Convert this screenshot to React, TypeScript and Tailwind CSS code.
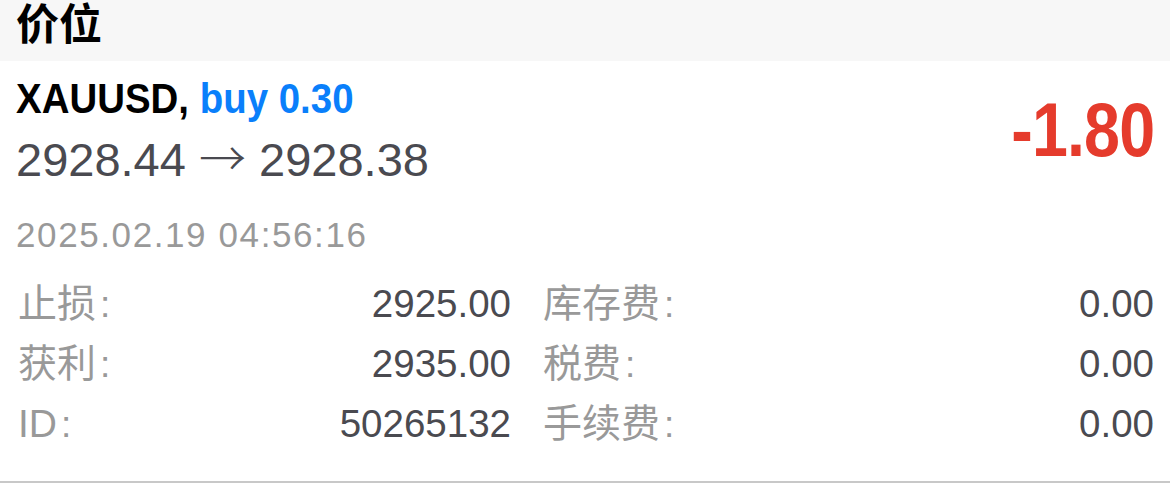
import React from "react";

const font = { fontFamily: '"Liberation Sans", "Noto Sans CJK SC", sans-serif' };
const cjk = { fontFamily: '"Noto Sans CJK SC", sans-serif' };

type Row = { label: string; value: string; label2: string; value2: string };

const rows: Row[] = [
  { label: "止损", value: "2925.00", label2: "库存费", value2: "0.00" },
  { label: "获利", value: "2935.00", label2: "税费", value2: "0.00" },
  { label: "ID", value: "50265132", label2: "手续费", value2: "0.00" },
];

function Header() {
  return (
    <div className="h-[61px] bg-[#f7f7f7] px-4">
      <div className="text-[43px] leading-[40px] pt-[1px] font-bold text-black" style={cjk}>
        价位
      </div>
    </div>
  );
}

function TradeSummary() {
  return (
    <div className="flex items-center justify-between px-4 pt-[13px]">
      <div className="flex flex-col">
        <div className="h-[48px] text-[43px] leading-[48px] font-bold whitespace-nowrap origin-left scale-x-[0.894]">
          <span className="text-black">XAUUSD, </span>
          <span className="text-[#0a7ffb]">buy 0.30</span>
        </div>
        <div className="mt-[12px] h-[52px] text-[47px] leading-[52px] text-[#4a4a50] whitespace-nowrap">
          2928.44{" "}
          <span style={cjk} className="font-light leading-[0px]">
            →
          </span>{" "}
          2928.38
        </div>
      </div>
      <div className="text-[76px] leading-[76px] font-bold tracking-[-1px] text-[#e53b2c] origin-right scale-x-[0.85]">
        -1.80
      </div>
    </div>
  );
}

function Label({ text }: { text: string }) {
  return (
    <span className="text-[#999999] text-[39px] pl-[2px]">
      {text}
      <span className="ml-[4px] text-[37px]">:</span>
    </span>
  );
}

function DetailRow({ label, value, label2, value2 }: Row) {
  return (
    <div className="grid grid-cols-[495px_1fr] gap-x-[30px] h-[60px] text-[38.5px] leading-[60px]">
      <div className="flex justify-between">
        <Label text={label} />
        <span className="text-[#4a4a50]">{value}</span>
      </div>
      <div className="flex justify-between">
        <Label text={label2} />
        <span className="text-[#4a4a50]">{value2}</span>
      </div>
    </div>
  );
}

export default function App() {
  return (
    <div className="w-[1170px] bg-white" style={font}>
      <Header />
      <div className="border-b-2 border-[#c8c8c8] pb-[27px]">
        <TradeSummary />
        <div className="px-4 mt-[29px] h-[40px] text-[35px] leading-[40px] tracking-[1.6px] text-[#999999]">
          2025.02.19 04:56:16
        </div>
        <div className="px-4 mt-[19px] flex flex-col">
          {rows.map((r) => (
            <DetailRow key={r.label} {...r} />
          ))}
        </div>
      </div>
    </div>
  );
}
